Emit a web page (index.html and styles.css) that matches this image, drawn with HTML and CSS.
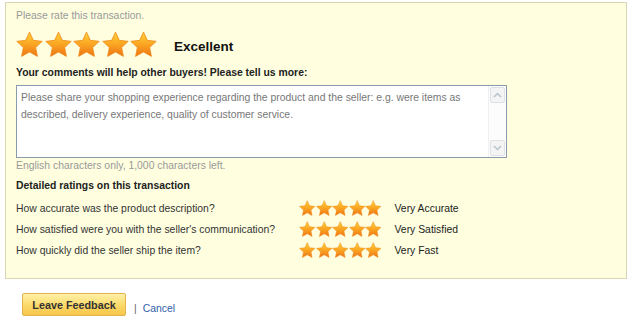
FILE: index.html
```html
<!DOCTYPE html>
<html lang="en">

    <head>
        <meta charset="UTF-8">
        <title>Leave Feedback</title>
        <link rel="stylesheet" href="styles.css">
    </head>

    <body>
        <!-- Definição da estrela, reutilizada em todas as notas -->
        <svg width="0" height="0" class="defs">
            <defs>
                <linearGradient id="starFill" x1="0" y1="0" x2="0" y2="1">
                    <stop offset="0" stop-color="#ffd23a"></stop>
                    <stop offset="0.45" stop-color="#fbaa24"></stop>
                    <stop offset="1" stop-color="#ee7414"></stop>
                </linearGradient>
                <symbol id="star" viewBox="0 0 100 100">
                    <path d="M50 4 L64.1 34.6 L97 38.4 L72.8 61.2 L79.4 94 L50 77.6 L20.6 94 L27.2 61.2 L3 38.4 L35.9 34.6 Z"
                        fill="url(#starFill)" stroke="#f08a1c" stroke-width="3" stroke-linejoin="round"></path>
                </symbol>
            </defs>
        </svg>

        <div class="panel">
            <div class="hint">Please rate this transaction.</div>

            <div class="overall">
                <div class="stars big">
                    <svg><use href="#star"></use></svg>
                    <svg><use href="#star"></use></svg>
                    <svg><use href="#star"></use></svg>
                    <svg><use href="#star"></use></svg>
                    <svg><use href="#star"></use></svg>
                </div>
                <span class="overall-label">Excellent</span>
            </div>

            <div class="heading comments-title">Your comments will help other buyers! Please tell us more:</div>

            <div class="comment-box">
                <div class="comment-text">Please share your shopping experience regarding the product and the seller: e.g. were items as described, delivery experience, quality of customer service.</div>
                <div class="scrollbar">
                    <div class="scroll-btn">
                        <svg width="9" height="6" viewBox="0 0 9 6"><path d="M1 5 L4.5 1.5 L8 5" fill="none" stroke="#b8c4cc" stroke-width="1.5"></path></svg>
                    </div>
                    <div class="scroll-btn">
                        <svg width="9" height="6" viewBox="0 0 9 6"><path d="M1 1 L4.5 4.5 L8 1" fill="none" stroke="#b8c4cc" stroke-width="1.5"></path></svg>
                    </div>
                </div>
            </div>

            <div class="hint counter">English characters only, 1,000 characters left.</div>

            <div class="heading detail-title">Detailed ratings on this transaction</div>

            <div class="ratings">
                <div class="rating-row">
                    <span class="question">How accurate was the product description?</span>
                    <div class="stars small">
                        <svg><use href="#star"></use></svg>
                        <svg><use href="#star"></use></svg>
                        <svg><use href="#star"></use></svg>
                        <svg><use href="#star"></use></svg>
                        <svg><use href="#star"></use></svg>
                    </div>
                    <span class="answer">Very Accurate</span>
                </div>
                <div class="rating-row">
                    <span class="question">How satisfied were you with the seller's communication?</span>
                    <div class="stars small">
                        <svg><use href="#star"></use></svg>
                        <svg><use href="#star"></use></svg>
                        <svg><use href="#star"></use></svg>
                        <svg><use href="#star"></use></svg>
                        <svg><use href="#star"></use></svg>
                    </div>
                    <span class="answer">Very Satisfied</span>
                </div>
                <div class="rating-row">
                    <span class="question">How quickly did the seller ship the item?</span>
                    <div class="stars small">
                        <svg><use href="#star"></use></svg>
                        <svg><use href="#star"></use></svg>
                        <svg><use href="#star"></use></svg>
                        <svg><use href="#star"></use></svg>
                        <svg><use href="#star"></use></svg>
                    </div>
                    <span class="answer">Very Fast</span>
                </div>
            </div>
        </div>

        <div class="actions">
            <button class="leave-btn">Leave Feedback</button>
            <span class="sep">|</span>
            <a href="#" class="cancel">Cancel</a>
        </div>
    </body>

</html>
```

FILE: styles.css
```css
body {
    margin: 0;
    background: #fff;
    font-family: "Liberation Sans", Arial, sans-serif;
    font-size: 10.4px;
    color: #333;
}

.defs {
    position: absolute;
}

.panel {
    margin: 2px 0 0 5px;
    width: 600px;
    height: 259px;
    padding: 6px 10px 10px 10px;
    background: #ffffe0;
    border: 1px solid #d9d6b4;
}

.hint {
    line-height: 14px;
    color: #999;
}

.overall {
    display: flex;
    align-items: center;
    margin-top: 8px;
    height: 26px;
}

.stars {
    display: flex;
}

.stars.big {
    gap: 1.5px;
}

.stars.big svg {
    width: 27px;
    height: 27px;
}

.stars.small svg {
    width: 16.5px;
    height: 16.5px;
}

.overall-label {
    margin-left: 17px;
    margin-top: 4px;
    font-size: 13.5px;
    font-weight: bold;
    color: #111;
}

.heading {
    line-height: 14px;
    font-weight: bold;
    color: #222;
}

.comments-title {
    margin-top: 9px;
}

.comment-box {
    display: flex;
    margin-top: 5px;
    width: 489px;
    height: 71px;
    background: #fff;
    border: 1px solid #8a9cab;
}

.comment-text {
    flex: 1;
    padding: 3px 4px;
    line-height: 17px;
    color: #777;
}

.scrollbar {
    width: 17px;
    display: flex;
    flex-direction: column;
    justify-content: space-between;
    padding: 1px 0;
    background: #fcfcfc;
    border-left: 1px solid #f0f0f0;
}

.scroll-btn {
    height: 14px;
    margin: 0 1px;
    display: flex;
    align-items: center;
    justify-content: center;
    background: #f4f4f4;
    border: 1px solid #dde2e6;
    border-radius: 2px;
}

.counter {
    margin-top: 1px;
}

.detail-title {
    margin-top: 6px;
}

.ratings {
    margin-top: 5px;
}

.rating-row {
    display: flex;
    align-items: center;
    height: 21px;
}

.question {
    width: 283px;
}

.answer {
    margin-left: 13px;
    color: #222;
}

.actions {
    display: flex;
    align-items: flex-end;
    margin: 14px 0 0 22px;
}

.leave-btn {
    height: 23px;
    width: 104px;
    padding: 0;
    font-family: "Liberation Sans", Arial, sans-serif;
    font-size: 10.8px;
    font-weight: bold;
    color: #333;
    background: linear-gradient(#fff1a8, #fbd968 55%, #f7c64a);
    border: 1px solid #e3b350;
    border-radius: 2px;
    cursor: pointer;
}

.sep {
    margin-left: 8px;
    color: #666;
    line-height: 14px;
}

.cancel {
    margin-left: 6px;
    color: #2f62a8;
    text-decoration: none;
    line-height: 14px;
}
```
